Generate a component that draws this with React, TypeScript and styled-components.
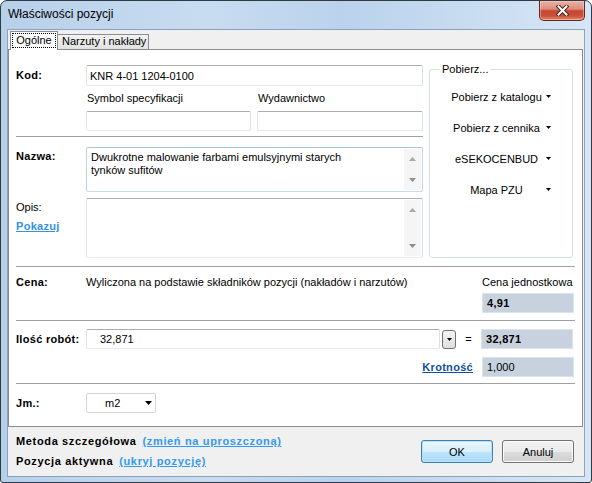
import React from "react";
import styled, { createGlobalStyle } from "styled-components";

const GlobalStyle = createGlobalStyle`
  html, body { margin: 0; padding: 0; }
  body {
    width: 592px;
    height: 483px;
    overflow: hidden;
    background: #ffffff;
    font-family: "Liberation Sans", Arial, sans-serif;
    font-size: 11px;
    color: #000;
  }
  * { box-sizing: border-box; }
`;

const Window = styled.div`
  width: 592px;
  height: 483px;
  display: flex;
  flex-direction: column;
  border: 1px solid #2f3a45;
  border-radius: 7px 7px 3px 3px;
  background: linear-gradient(to right, #b7d0ea 0%, #c8dcf1 35%, #bad2ec 58%, #d6e6f6 100%);
  overflow: hidden;
`;

const TitleBar = styled.div`
  height: 28px;
  display: flex;
  align-items: flex-start;
`;

const Title = styled.div`
  flex: 1;
  padding-left: 7px;
  line-height: 27px;
  font-size: 12px;
  color: #000;
`;

const CloseButton = styled.div`
  width: 46px;
  height: 20px;
  margin-right: 6px;
  border: 1px solid #5e2a22;
  border-top: none;
  border-radius: 0 0 5px 5px;
  background: linear-gradient(#eab0a3 0%, #dc8e7c 42%, #c54632 52%, #cc4f36 78%, #e28a6c 100%);
  display: flex;
  align-items: center;
  justify-content: center;
  box-shadow: inset 0 0 0 1px rgba(255, 220, 210, 0.45);
`;

const Client = styled.div`
  flex: 1;
  margin: 0 6px 5px 6px;
  border: 1px solid #8da2ba;
  background: #f0f0f0;
  display: flex;
  flex-direction: column;
`;

const TabStrip = styled.div`
  margin-top: 1px;
  margin-bottom: -1px;
  height: 19px;
  padding-left: 2px;
  display: flex;
  align-items: flex-end;
  position: relative;
  z-index: 1;
`;

const Tab = styled.div<{ $active?: boolean }>`
  border: 1px solid #898c95;
  border-bottom: none;
  line-height: 13px;
  ${(p) =>
    p.$active
      ? `
    height: 19px;
    width: 48px;
    padding: 1px 1px 0 1px;
    background: #ffffff;
  `
      : `
    height: 15px;
    width: 91px;
    margin-bottom: 1px;
    border-left: none;
    padding: 0 0 0 4px;
    background: linear-gradient(#f3f3f3, #e2e2e2);
  `}
`;

const FocusRect = styled.div`
  height: 15px;
  border: 1px dotted #000;
  text-align: center;
`;

const Panel = styled.div`
  height: 378px;
  border: 1px solid #898c95;
  margin-right: 1px;
  background: #ffffff;
  padding: 15px 7px 0 7px;
`;

const TopSection = styled.div`
  display: flex;
  gap: 6px;
`;

const LeftCol = styled.div`
  width: 407px;
`;

const FieldRow = styled.div<{ $top?: boolean; $mt?: number }>`
  display: flex;
  align-items: ${(p) => (p.$top ? "flex-start" : "center")};
  margin-top: ${(p) => p.$mt ?? 0}px;
`;

const FieldLabel = styled.div<{ $bold?: boolean; $pt?: number }>`
  width: 70px;
  flex: none;
  line-height: 13px;
  padding-top: ${(p) => p.$pt ?? 0}px;
  font-weight: ${(p) => (p.$bold ? "bold" : "normal")};
  letter-spacing: ${(p) => (p.$bold ? "0.3px" : "0")};
`;

const TextInput = styled.input<{ $w: number; $h: number; $pl?: number }>`
  width: ${(p) => p.$w}px;
  height: ${(p) => p.$h}px;
  margin: 0;
  padding: 0 0 0 ${(p) => p.$pl ?? 3}px;
  border: 1px solid;
  border-color: #abadb3 #dbdfe6 #e3e9ef #e2e3ea;
  border-radius: 2px;
  background: #fff;
  font: inherit;
  color: #000;
  outline: none;
`;

const SubGrid = styled.div<{ $h?: number }>`
  margin-left: 70px;
  display: grid;
  grid-template-columns: 165px 166px;
  column-gap: 6px;
  line-height: ${(p) => p.$h ?? 20}px;
`;

const SubLabel = styled.div`
  padding-left: 1px;
`;

const Separator = styled.div<{ $mt: number }>`
  height: 1px;
  margin-top: ${(p) => p.$mt}px;
  background: #a0a0a0;
`;

const Memo = styled.div<{ $h: number; $focused?: boolean }>`
  width: 337px;
  height: ${(p) => p.$h}px;
  display: flex;
  border: 1px solid;
  border-color: ${(p) =>
    p.$focused ? "#a9c3dc #bcd3e6 #c6dbec #bcd3e6" : "#abadb3 #dbdfe6 #e3e9ef #e2e3ea"};
  border-radius: 2px;
  background: #fff;
`;

const MemoText = styled.div`
  flex: 1;
  padding: 3px 4px;
  line-height: 13px;
`;

const MemoScroll = styled.div`
  width: 17px;
  margin: 1px 1px 1px 0;
  background: #f5f5f5;
  display: flex;
  flex-direction: column;
  justify-content: space-between;
  align-items: center;
  padding: 8px 0 8px;
`;

const OpisLabels = styled.div`
  width: 70px;
  flex: none;
  padding-top: 3px;
  line-height: 13px;
`;

const BlueLink = styled.div<{ $dark?: boolean; $mt?: number }>`
  margin-top: ${(p) => p.$mt ?? 0}px;
  color: ${(p) => (p.$dark ? "#0f4f9e" : "#3391e6")};
  font-weight: bold;
  letter-spacing: 0.3px;
  text-decoration: underline;
  line-height: 13px;
`;

const GroupBox = styled.div`
  position: relative;
  width: 144px;
  height: 189px;
  margin-top: 4px;
  border: 1px solid #d5dfe5;
  border-radius: 3px;
  padding: 11px 19px 0 19px;
`;

const Legend = styled.div`
  position: absolute;
  top: -7px;
  left: 10px;
  padding: 0 2px;
  background: #fff;
  line-height: 13px;
`;

const MenuButton = styled.div`
  height: 31px;
  display: grid;
  grid-template-columns: 95px 9px;
  align-items: center;
  justify-items: center;
  white-space: nowrap;
`;

const CenaGrid = styled.div`
  display: grid;
  grid-template-columns: 70px 1fr 93px;
  row-gap: 4px;
  padding-top: 9px;
  line-height: 13px;
`;

const Label = styled.div<{ $bold?: boolean }>`
  font-weight: ${(p) => (p.$bold ? "bold" : "normal")};
  letter-spacing: ${(p) => (p.$bold ? "0.3px" : "0")};
`;

const ValueBox = styled.div<{ $bold?: boolean }>`
  width: 92px;
  height: 20px;
  background: #c8d2de;
  border: 1px solid #dde3ea;
  padding-left: 4px;
  line-height: 18px;
  font-weight: ${(p) => (p.$bold ? "bold" : "normal")};
  letter-spacing: ${(p) => (p.$bold ? "0.3px" : "0")};
`;

const QtyRow = styled.div`
  display: flex;
  align-items: center;
  margin-top: 8px;
`;

const DropButton = styled.div`
  width: 14px;
  height: 19px;
  margin-left: 2px;
  border: 1px solid #707070;
  border-radius: 3px;
  background: linear-gradient(#f4f4f4, #dedede);
  display: flex;
  align-items: center;
  justify-content: center;
`;

const Equals = styled.div`
  width: 25px;
  text-align: center;
`;

const KrotRow = styled.div`
  display: flex;
  justify-content: flex-end;
  align-items: center;
  gap: 9px;
  margin-top: 8px;
  padding-right: 1px;
`;

const JmRow = styled.div`
  display: flex;
  align-items: center;
  margin-top: 9px;
`;

const Select = styled.div`
  width: 70px;
  height: 20px;
  border: 1px solid #d5d5d5;
  border-radius: 2px;
  background: #fff;
  display: flex;
  align-items: center;
  padding: 0 3px 0 18px;
`;

const SelectArrow = styled.div`
  margin-left: auto;
  display: flex;
`;

const Footer = styled.div`
  flex: 1;
  display: flex;
  padding: 0 10px 0 8px;
`;

const FooterInfo = styled.div`
  padding-top: 4px;
  display: flex;
  flex-direction: column;
`;

const FooterLine = styled.div`
  line-height: 20px;
  font-weight: bold;
  letter-spacing: 0.65px;
  display: flex;
  gap: 6px;
`;

const FooterLink = styled.span`
  color: #3399f0;
  text-decoration: underline;
`;

const FooterButtons = styled.div`
  margin-left: auto;
  margin-top: 13px;
  display: flex;
  gap: 9px;
`;

const DialogButton = styled.div<{ $default?: boolean }>`
  width: 72px;
  height: 23px;
  border: 1px solid ${(p) => (p.$default ? "#3c7fb1" : "#707070")};
  border-radius: 3px;
  background: ${(p) =>
    p.$default
      ? "linear-gradient(#eaf6fd 0%, #d9f0fc 50%, #bee6fd 50%, #a7d9f5 100%)"
      : "linear-gradient(#f2f2f2 0%, #ebebeb 50%, #dddddd 50%, #cfcfcf 100%)"};
  box-shadow: inset 0 0 0 1px ${(p) => (p.$default ? "#b8e2f8" : "#fcfcfc")};
  display: flex;
  align-items: center;
  justify-content: center;
`;

const UpArrow = () => (
  <svg width="7" height="4" viewBox="0 0 7 4">
    <polygon points="0,4 3.5,0 7,4" fill="#a8a8a8" />
  </svg>
);

const DownArrow = ({ color = "#8e8e8e" }: { color?: string }) => (
  <svg width="7" height="4" viewBox="0 0 7 4">
    <polygon points="0,0 7,0 3.5,4" fill={color} />
  </svg>
);

const SmallCaret = () => (
  <svg width="5" height="3" viewBox="0 0 5 3">
    <polygon points="0,0 5,0 2.5,3" fill="#000" />
  </svg>
);

const CloseGlyph = () => (
  <svg width="13" height="11" viewBox="0 0 13 11">
    <path d="M2.5 1.5 L10.5 9.5 M10.5 1.5 L2.5 9.5" stroke="#4a2520" strokeWidth="4" strokeLinecap="square" />
    <path d="M2.5 1.5 L10.5 9.5 M10.5 1.5 L2.5 9.5" stroke="#ffffff" strokeWidth="2" strokeLinecap="square" />
  </svg>
);

const menuItems = ["Pobierz z katalogu", "Pobierz z cennika", "eSEKOCENBUD", "Mapa PZU"];

export default function App() {
  return (
    <>
      <GlobalStyle />
      <Window>
        <TitleBar>
          <Title>Właściwości pozycji</Title>
          <CloseButton>
            <CloseGlyph />
          </CloseButton>
        </TitleBar>
        <Client>
          <TabStrip>
            <Tab $active>
              <FocusRect>Ogólne</FocusRect>
            </Tab>
            <Tab>Narzuty i nakłady</Tab>
          </TabStrip>
          <Panel>
            <TopSection>
              <LeftCol>
                <FieldRow>
                  <FieldLabel $bold>Kod:</FieldLabel>
                  <TextInput $w={337} $h={21} readOnly value="KNR 4-01 1204-0100" />
                </FieldRow>
                <SubGrid $h={25}>
                  <SubLabel>Symbol specyfikacji</SubLabel>
                  <SubLabel>Wydawnictwo</SubLabel>
                </SubGrid>
                <SubGrid>
                  <TextInput $w={165} $h={20} readOnly value="" />
                  <TextInput $w={166} $h={20} readOnly value="" />
                </SubGrid>
                <Separator $mt={5} />
                <FieldRow $top $mt={10}>
                  <FieldLabel $bold $pt={3}>
                    Nazwa:
                  </FieldLabel>
                  <Memo $h={45} $focused>
                    <MemoText>
                      Dwukrotne malowanie farbami emulsyjnymi starych
                      <br />
                      tynków sufitów
                    </MemoText>
                    <MemoScroll>
                      <UpArrow />
                      <DownArrow />
                    </MemoScroll>
                  </Memo>
                </FieldRow>
                <FieldRow $top $mt={6}>
                  <OpisLabels>
                    <div>Opis:</div>
                    <BlueLink $mt={6}>Pokazuj</BlueLink>
                  </OpisLabels>
                  <Memo $h={60}>
                    <MemoText />
                    <MemoScroll>
                      <UpArrow />
                      <DownArrow />
                    </MemoScroll>
                  </Memo>
                </FieldRow>
              </LeftCol>
              <GroupBox>
                <Legend>Pobierz...</Legend>
                {menuItems.map((item) => (
                  <MenuButton key={item}>
                    <span>{item}</span>
                    <SmallCaret />
                  </MenuButton>
                ))}
              </GroupBox>
            </TopSection>
            <Separator $mt={8} />
            <CenaGrid>
              <Label $bold>Cena:</Label>
              <Label>Wyliczona na podstawie składników pozycji (nakładów i narzutów)</Label>
              <Label>Cena jednostkowa</Label>
              <div />
              <div />
              <ValueBox $bold>4,91</ValueBox>
            </CenaGrid>
            <Separator $mt={7} />
            <QtyRow>
              <FieldLabel $bold>Ilość robót:</FieldLabel>
              <TextInput $w={354} $h={20} $pl={13} readOnly value="32,871" />
              <DropButton>
                <SmallCaret />
              </DropButton>
              <Equals>=</Equals>
              <ValueBox $bold>32,871</ValueBox>
            </QtyRow>
            <KrotRow>
              <BlueLink $dark>Krotność</BlueLink>
              <ValueBox>1,000</ValueBox>
            </KrotRow>
            <Separator $mt={6} />
            <JmRow>
              <FieldLabel $bold>Jm.:</FieldLabel>
              <Select>
                m2
                <SelectArrow>
                  <DownArrow color="#000" />
                </SelectArrow>
              </Select>
            </JmRow>
          </Panel>
          <Footer>
            <FooterInfo>
              <FooterLine>
                Metoda szczegółowa
                <FooterLink>(zmień na uproszczoną)</FooterLink>
              </FooterLine>
              <FooterLine>
                Pozycja aktywna
                <FooterLink>(ukryj pozycję)</FooterLink>
              </FooterLine>
            </FooterInfo>
            <FooterButtons>
              <DialogButton $default>OK</DialogButton>
              <DialogButton>Anuluj</DialogButton>
            </FooterButtons>
          </Footer>
        </Client>
      </Window>
    </>
  );
}
